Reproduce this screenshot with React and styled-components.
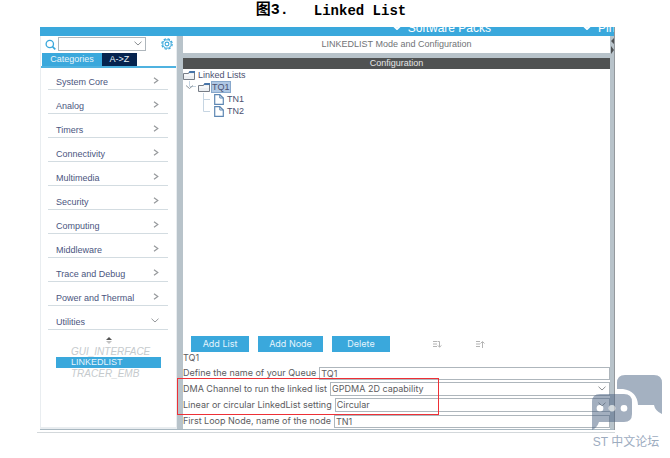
import React from "react";
import styled, { createGlobalStyle } from "styled-components";

const GlobalStyle = createGlobalStyle`
  *, *::before, *::after { box-sizing: border-box; }
  body {
    margin: 0;
    background: #fff;
    font-family: Inter, "Liberation Sans", sans-serif;
    font-size: 9px;
    line-height: 12px;
    color: #5c5c60;
  }
  button, input, select { font: inherit; color: inherit; margin: 0; border-radius: 0; }
  ul { list-style: none; margin: 0; padding: 0; }
`;

const Page = styled.main`
  position: relative;
  min-height: 100vh;
  padding: 0 55px 25px 37px;
`;

const Caption = styled.h1`
  display: flex;
  justify-content: center;
  gap: 25px;
  height: 27px;
  margin: 0;
  padding-left: 10px;
  font: bold 14px/22px "Liberation Mono", "Noto Sans CJK SC", monospace;
  color: #000;
`;

const FigureNumber = styled.span`
  font-size: 15px;
`;

const Frame = styled.section`
  border-bottom: 1px solid #d3d8db;
  padding: 0 0 2px 3px;
`;

const Window = styled.div`
  border-right: 1px solid #94999d;
`;

const TopBar = styled.nav`
  display: flex;
  justify-content: flex-end;
  gap: 92px;
  height: 9px;
  overflow: hidden;
  background: #3aa8dc;
  color: #fff;
`;

const TopItem = styled.a`
  display: flex;
  align-items: flex-start;
  gap: 7px;
  margin-top: -7px;
  font: 12px/16px "Liberation Sans", sans-serif;
  color: inherit;
  text-decoration: none;
  white-space: nowrap;
  width: ${(p) => p.$width || "auto"};
  svg { margin-top: 5px; flex: none; }
`;

const Body = styled.div`
  display: flex;
  border-bottom: 1px solid #a9b8c1;
`;

const Sidebar = styled.aside`
  flex: 0 0 137px;
  display: flex;
  flex-direction: column;
  border: solid #e9edf0;
  border-width: 0 1px 2px 1px;
  font-family: "Liberation Sans", sans-serif;
`;

const SearchRow = styled.div`
  display: flex;
  align-items: center;
  height: 17px;
  padding: 0 3px 1px 4px;
  color: #3aa8dc;
`;

const SelectWrap = styled.span`
  position: relative;
  display: flex;
  flex: 1;
  min-width: 0;
  margin: ${(p) => (p.$search ? "0 15px 0 2px" : "0")};
  svg { position: absolute; right: 4px; top: 4px; color: #8b8f92; pointer-events: none; }
`;

const Select = styled.select`
  appearance: none;
  width: 100%;
  height: 14px;
  border: 1px solid #aeb6bc;
  background: #fff;
  padding: 0 14px 0 1px;
  line-height: 12px;
`;

const Tabs = styled.div`
  display: flex;
  padding-left: 1px;
  border-bottom: 2px solid #4fb2e0;
`;

const Tab = styled.button`
  height: 13px;
  padding: 0;
  border: 0;
  width: ${(p) => p.$width};
  background: ${(p) => (p.$dark ? "#06244f" : "#3aa8dc")};
  color: #e8f4fb;
  line-height: 13px;
`;

const Categories = styled.ul`
  margin-top: -2px;
  padding: 0 8px 0 7px;
`;

const Category = styled.button`
  display: flex;
  justify-content: space-between;
  align-items: center;
  width: 100%;
  height: 24px;
  padding: 9px 9px 0 8px;
  border: 0;
  border-bottom: 1px solid #d3dce1;
  background: none;
  color: #4b5580;
  text-align: left;
  white-space: nowrap;
  svg { color: #96999c; margin-bottom: 3px; }
`;

const SubList = styled.ul`
  padding: 7px 15px 0 15px;
  svg { display: block; margin: 0 auto 2px; }
`;

const SubItem = styled.li`
  height: 11px;
  padding-left: 15px;
  font-size: ${(p) => (p.$active ? "9px" : "10px")};
  line-height: 11px;
  white-space: nowrap;
  font-style: ${(p) => (p.$active ? "normal" : "italic")};
  color: ${(p) => (p.$active ? "#e4f4fc" : "#c5cacd")};
  background: ${(p) => (p.$active ? "#3aa8dc" : "none")};
`;

const Content = styled.section`
  flex: 1;
  min-width: 0;
  display: flex;
  flex-direction: column;
  border: solid #b8c3ca;
  border-width: 0 4px 0 6px;
`;

const TitleRow = styled.div`
  position: relative;
  height: 17px;
  color: #707376;
  font-family: "Liberation Sans", sans-serif;
  text-align: center;
  line-height: 17px;
  svg { position: absolute; right: -4px; top: 2px; color: #4e5153; }
`;

const Heading = styled.h2`
  margin: 0;
  border-top: 5px solid #b8c3ca;
  background: #505252;
  color: #e6e6e6;
  font: 400 9px/11px "Liberation Sans", sans-serif;
  text-align: center;
`;

const Tree = styled.ul`
  flex: 1;
  min-height: 267px;
  color: #4b5070;
  font-family: "Liberation Sans", sans-serif;
`;

const TreeRow = styled.li`
  display: flex;
  align-items: center;
  gap: ${(p) => p.$gap || "3px"};
  height: 12px;
  svg { flex: none; }
`;

const Selected = styled.span`
  background: #b0c8e4;
  border: 1px solid #88a8cc;
  height: 12px;
  line-height: 10px;
`;

const Actions = styled.div`
  display: flex;
  align-items: center;
  padding-left: 8px;
  gap: 9px;
`;

const ActionButton = styled.button`
  flex: 0 0 ${(p) => p.$width};
  height: 16px;
  padding: 0;
  border: 0;
  background: #3aa8dc;
  color: #e4f4fc;
  line-height: 16px;
`;

const OrderButton = styled.button`
  display: flex;
  padding: 0;
  border: 0;
  background: none;
  color: #b4b4b4;
  margin-left: ${(p) => p.$gap};
`;

const Form = styled.form`
  display: flex;
  flex-direction: column;
`;

const FormTitle = styled.div`
  height: 13px;
  line-height: 12px;
`;

const Field = styled.div`
  display: flex;
  align-items: center;
  gap: 3px;
  height: 16px;
  white-space: nowrap;
`;

const TextInput = styled.input`
  flex: 1;
  min-width: 0;
  height: 13px;
  border: 1px solid #aeb6bc;
  background: #fff;
  padding: 0 1px;
`;

const Highlighted = styled.div`
  position: relative;
  &::after {
    content: "";
    position: absolute;
    z-index: 1;
    left: -6px;
    top: -3px;
    bottom: -2px;
    width: 262px;
    border: 1px solid #ee3036;
    pointer-events: none;
  }
`;

const Watermark = styled.div`
  position: absolute;
  z-index: 2;
  right: 8px;
  bottom: 7px;
  width: 72px;
  pointer-events: none;
  svg { display: block; }
`;

const WatermarkText = styled.div`
  margin-top: 3px;
  color: #9dacbf;
  font: 12px/17px "Liberation Sans", "Noto Sans CJK SC", sans-serif;
  text-align: center;
  white-space: nowrap;
`;

const categories = [
  "System Core", "Analog", "Timers", "Connectivity", "Multimedia", "Security",
  "Computing", "Middleware", "Trace and Debug", "Power and Thermal", "Utilities",
];

const Down = ({ stroke = 1 }) => (
  <svg width="8" height="5" viewBox="0 0 8 5" fill="none" stroke="currentColor" strokeWidth={stroke}>
    <path d="M.5.7 4 4 7.5.7" />
  </svg>
);

const Right = () => (
  <svg width="6" height="7" viewBox="0 0 6 7" fill="none" stroke="currentColor" strokeWidth="1.2">
    <path d="M1 .7 4.8 3.5 1 6.3" />
  </svg>
);

const SearchIcon = () => (
  <svg width="11" height="11" viewBox="0 0 11 11" fill="none" stroke="currentColor" strokeWidth="1.3">
    <circle cx="4.8" cy="5" r="3.7" />
    <path d="m7.5 7.6 2.8 2.8" strokeWidth="1.6" />
  </svg>
);

const Gear = () => (
  <svg width="12" height="12" viewBox="0 0 12 12" fill="none" stroke="currentColor">
    <circle cx="6" cy="6" r="5.2" strokeWidth="1.2" strokeDasharray="2.4 1.68" />
    <circle cx="6" cy="6" r="4.2" strokeWidth="1" />
    <circle cx="6" cy="6" r="1.9" strokeWidth="1.1" />
  </svg>
);

const Folder = () => (
  <svg width="12" height="9" viewBox="0 0 12 9">
    <path d="M.5 2.5h5l1-1.5h5v7.5H.5z" fill="#eceff2" stroke="#777d86" />
    <path d="M6.5 0H12v2H5.5z" fill="#4774a8" />
    <path d="M1 4h10" stroke="#fff" />
  </svg>
);

const FileIcon = () => (
  <svg width="10" height="11" viewBox="0 0 10 11">
    <path d="M.7.7h5.1L9.3 4v6.3H.7z" fill="#fff" stroke="#5e87b3" strokeWidth="1.2" />
    <path d="M5.8.7V4h3.5" fill="none" stroke="#5e87b3" />
  </svg>
);

const Branch = ({ last }) => (
  <svg width="28" height="12" viewBox="0 0 28 12" fill="none" stroke="#c6d5e2">
    <path d={last ? "M20.5 0v6.5H27" : "M20.5 0v12M20.5 6.5H27"} />
  </svg>
);

const Expander = () => (
  <svg width="14" height="12" viewBox="0 0 14 12" fill="none">
    <path d="M6.5 0v5.5H13" stroke="#c6d5e2" />
    <path d="M3 4.5 6.5 7.5 10 4.5" stroke="#8e969b" />
  </svg>
);

const SortMark = () => (
  <svg width="6" height="7" viewBox="0 0 6 7">
    <path d="M0 3 3 0l3 3z" fill="#555" />
    <path d="M0 4h6L3 7z" fill="#c2c2c2" />
  </svg>
);

const Order = ({ up }) => (
  <svg width="9" height="7" viewBox="0 0 9 7" fill="none" stroke="currentColor">
    <path d="M0 .5h4M0 3h4M0 5.5h4" />
    <path d={up ? "M6.5 7V1M4.5 2.5l2-2 2 2" : "M4.5.5h2V6M4.8 4.4l1.7 1.8 2-1.8"} />
  </svg>
);

export default function App() {
  return (
    <Page>
      <GlobalStyle />
      <Caption><FigureNumber>图3.</FigureNumber><span>Linked List</span></Caption>
      <Frame>
        <Window>
          <TopBar>
            <TopItem href="#packs"><Down stroke={2} />Software Packs</TopItem>
            <TopItem href="#pinout" $width="31px"><Down stroke={2} />Pin</TopItem>
          </TopBar>
          <Body>
            <Sidebar>
              <SearchRow>
                <SearchIcon />
                <SelectWrap $search>
                  <Select aria-label="Search"><option /></Select>
                  <Down />
                </SelectWrap>
                <Gear />
              </SearchRow>
              <Tabs role="tablist">
                <Tab role="tab" aria-selected="true" $width="60px">Categories</Tab>
                <Tab role="tab" aria-selected="false" $dark $width="35px">A-&gt;Z</Tab>
              </Tabs>
              <Categories>
                {categories.map((name, i) => (
                  <li key={name}>
                    <Category>
                      {name}
                      {i === categories.length - 1 ? <Down /> : <Right />}
                    </Category>
                  </li>
                ))}
              </Categories>
              <SubList>
                <li><SortMark /></li>
                <SubItem>GUI_INTERFACE</SubItem>
                <SubItem $active>LINKEDLIST</SubItem>
                <SubItem>TRACER_EMB</SubItem>
              </SubList>
            </Sidebar>
            <Content>
              <TitleRow>
                LINKEDLIST Mode and Configuration
                <svg width="3" height="16" viewBox="0 0 3 16" fill="currentColor">
                  <path d="M3 0v6L0 3zM0 8l3 4-3 4z" />
                </svg>
              </TitleRow>
              <Heading>Configuration</Heading>
              <Tree>
                <TreeRow><Folder />Linked Lists</TreeRow>
                <TreeRow $gap="1px"><Expander /><Folder /><Selected>TQ1</Selected></TreeRow>
                <TreeRow><Branch /><FileIcon />TN1</TreeRow>
                <TreeRow><Branch last /><FileIcon />TN2</TreeRow>
              </Tree>
              <Actions>
                <ActionButton $width="58px">Add List</ActionButton>
                <ActionButton $width="65px">Add Node</ActionButton>
                <ActionButton $width="58px">Delete</ActionButton>
                <OrderButton aria-label="Move down" $gap="34px"><Order /></OrderButton>
                <OrderButton aria-label="Move up" $gap="25px"><Order up /></OrderButton>
              </Actions>
              <Form>
                <FormTitle>TQ1</FormTitle>
                <Field>
                  <label htmlFor="queue">Define the name of your Queue</label>
                  <TextInput id="queue" defaultValue="TQ1" />
                </Field>
                <Highlighted>
                  <Field>
                    <label htmlFor="channel">DMA Channel to run the linked list</label>
                    <SelectWrap>
                      <Select id="channel"><option>GPDMA 2D capability</option></Select>
                      <Down />
                    </SelectWrap>
                  </Field>
                  <Field>
                    <label htmlFor="mode">Linear or circular LinkedList setting</label>
                    <SelectWrap>
                      <Select id="mode"><option>Circular</option></Select>
                      <Down />
                    </SelectWrap>
                  </Field>
                </Highlighted>
                <Field>
                  <label htmlFor="first">First Loop Node, name of the node</label>
                  <TextInput id="first" defaultValue="TN1" />
                </Field>
              </Form>
            </Content>
          </Body>
        </Window>
      </Frame>
      <Watermark>
        <svg width="72" height="56" viewBox="0 0 72 56">
          <path d="M35 0h29q8 0 8 8v31q-7-3-8-9H48Q47 16 33 14h-6V8q0-8 8-8z" fill="#a4b1c1" />
          <path fillRule="evenodd" d="M10 19h24q8 0 8 8v12q0 8-8 8H9q-2 6-7 8V27q0-8 8-8zm0 11a3.3 3.3 0 1 0 0 6.6 3.3 3.3 0 1 0 0-6.6z m12 0a3.3 3.3 0 1 0 0 6.6 3.3 3.3 0 1 0 0-6.6zm12 0a3.3 3.3 0 1 0 0 6.6 3.3 3.3 0 1 0 0-6.6z" fill="#47607f" fillOpacity=".5" />
          <path d="M10 30a3.3 3.3 0 1 0 0 6.6 3.3 3.3 0 1 0 0-6.6zm12 0a3.3 3.3 0 1 0 0 6.6 3.3 3.3 0 1 0 0-6.6zm12 0a3.3 3.3 0 1 0 0 6.6 3.3 3.3 0 1 0 0-6.6z" fill="#fff" fillOpacity=".4" />
        </svg>
        <WatermarkText>ST 中文论坛</WatermarkText>
      </Watermark>
    </Page>
  );
}
